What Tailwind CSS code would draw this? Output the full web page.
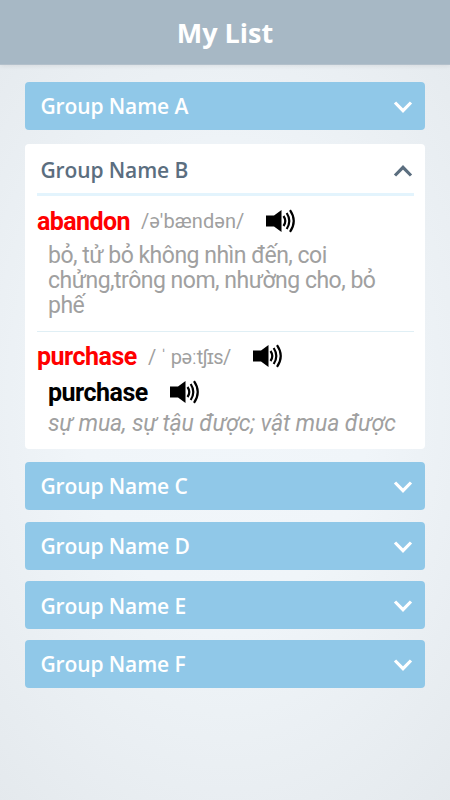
<!DOCTYPE html>
<html lang="en">
  <head>
    <meta charset="UTF-8" />
    <meta name="viewport" content="width=device-width, initial-scale=1.0" />
    <title>My List</title>
    <script src="https://cdn.jsdelivr.net/npm/@tailwindcss/browser@4"></script>
  </head>
  <body class="bg-[#e5eaee]">
    <svg class="hidden">
      <symbol id="chevron" viewBox="0 0 20 12">
        <path d="M2 1.500 10 9.600l8-8.100" fill="none" stroke="currentColor" stroke-width="3.2" />
      </symbol>
      <symbol id="speaker" viewBox="0 0 30 24">
        <path d="M1 6.500h8L16.500 1v22L9 17.500H1z" fill="currentColor" />
        <path d="M18.500 7q3.600 5 0 10M21.700 4q5.200 8 0 16M25 1.200q7.500 10.800 0 21.600" fill="none" stroke="currentColor" stroke-width="2.2" />
      </symbol>
    </svg>

    <div class="h-[800px] w-[450px] overflow-hidden bg-[radial-gradient(ellipse_360px_520px_at_50%_50%,#f1f6fa_0%,#f0f5f9_40%,#e4e9ed_100%)] font-['Open_Sans',sans-serif]">
      <header class="h-[65px] bg-[#a7b8c5] border-b border-[#b3c0cb] shadow-[0_1px_5px_rgba(0,0,0,0.08)] flex justify-center items-center">
        <h1 class="pt-0.5 text-[27px] font-bold text-white">My List</h1>
      </header>

      <main class="px-[25px] pt-[17px] text-[21px] font-semibold tracking-[-0.12px]">
        <div class="h-12 rounded bg-[#90c8e8] text-white pl-[15.500px] pr-3 flex items-center justify-between">
          <span class="pt-0.5">Group Name A</span>
          <svg class="mt-px w-5 h-3"><use href="#chevron" /></svg>
        </div>

        <section class="mt-3.5 h-[305px] rounded bg-white pl-3 pr-[11px]">
          <div class="h-[52px] border-b-[3px] border-[#e3f4fd] text-[#5b6e7f] pl-[3.500px] pr-px flex items-center justify-between">
            <span class="pt-[5px]">Group Name B</span>
            <svg class="mt-1 w-5 h-3 rotate-180"><use href="#chevron" /></svg>
          </div>

          <div class="font-['Roboto',sans-serif] font-normal text-[#a0a0a0]">
            <div class="h-[136px] border-b border-[#e0eff5] pt-[11px]">
              <div class="h-7 flex items-center">
                <span class="w-[104px] pt-0.5 text-[25px] tracking-[-0.6px] font-bold text-[#ff0000]">abandon</span>
                <span class="w-[124px] text-xl tracking-[0.1px] whitespace-pre">/ə'bændən/</span>
                <svg class="w-[30px] h-6 text-black"><use href="#speaker" /></svg>
              </div>
              <p class="pl-[11px] pt-2 text-[23px] tracking-[-0.5px] leading-[25px] whitespace-nowrap">bỏ, tử bỏ không nhìn đến, coi<br />chửng,trông nom, nhường cho, bỏ<br />phế</p>
            </div>

            <div class="pt-[10px]">
              <div class="h-7 flex items-center">
                <span class="w-[111px] pt-0.5 text-[25px] tracking-[-0.5px] font-bold text-[#ff0000]">purchase</span>
                <span class="w-[104px] pt-px text-xl tracking-[-0.5px] whitespace-pre">/ ˈ pəːtʃɪs/</span>
                <svg class="w-[30px] h-6 text-black"><use href="#speaker" /></svg>
              </div>
              <div class="h-7 mt-2 pl-[11px] flex items-center">
                <span class="w-[121px] pt-0.5 text-[25px] tracking-[-0.5px] font-bold text-black">purchase</span>
                <svg class="w-[30px] h-6 text-black"><use href="#speaker" /></svg>
              </div>
              <p class="pl-[11px] pt-1 text-[23px] tracking-[-0.14px] leading-[28px] italic whitespace-nowrap">sự mua, sự tậu được; vật mua được</p>
            </div>
          </div>
        </section>

        <div class="mt-[13px] h-12 rounded bg-[#90c8e8] text-white pl-[15.500px] pr-3 flex items-center justify-between">
          <span class="pt-0.5">Group Name C</span>
          <svg class="mt-px w-5 h-3"><use href="#chevron" /></svg>
        </div>
        <div class="mt-3 h-12 rounded bg-[#90c8e8] text-white pl-[15.500px] pr-3 flex items-center justify-between">
          <span class="pt-0.5">Group Name D</span>
          <svg class="mt-px w-5 h-3"><use href="#chevron" /></svg>
        </div>
        <div class="mt-[11px] h-12 rounded bg-[#90c8e8] text-white pl-[15.500px] pr-3 flex items-center justify-between">
          <span class="pt-1">Group Name E</span>
          <svg class="mt-0.5 w-5 h-3"><use href="#chevron" /></svg>
        </div>
        <div class="mt-[11px] h-12 rounded bg-[#90c8e8] text-white pl-[15.500px] pr-3 flex items-center justify-between">
          <span class="pt-0.5">Group Name F</span>
          <svg class="mt-px w-5 h-3"><use href="#chevron" /></svg>
        </div>
      </main>
    </div>
  </body>
</html>
